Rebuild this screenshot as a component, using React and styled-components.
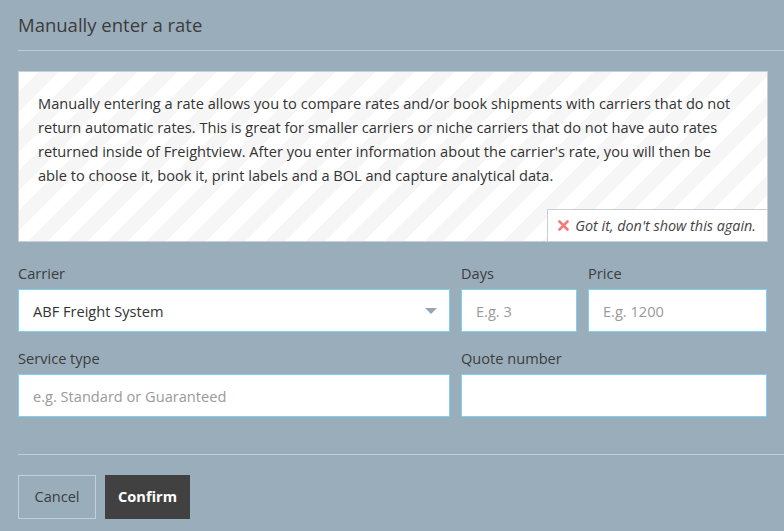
import React from "react";
import styled, { createGlobalStyle } from "styled-components";

const GlobalStyle = createGlobalStyle`
  html, body {
    margin: 0;
    padding: 0;
    background: #9aadbb;
  }
  body {
    font-family: "Open Sans", "Lato", sans-serif;
    color: #3a3a3a;
    overflow: hidden;
  }
`;

const Modal = styled.div`
  width: 784px;
  height: 531px;
  box-sizing: border-box;
  padding: 0 16px 0 18px;
  background: #9aadbb;
  overflow: hidden;
`;

const Header = styled.h2`
  margin: 0;
  padding: 12px 0 13px;
  font-size: 18.5px;
  font-weight: 400;
  color: #3c3c3c;
  line-height: 25px;
`;

const Divider = styled.div`
  height: 1px;
  background: #bfcdd6;
  margin-right: -16px;
`;

const InfoBox = styled.div`
  position: relative;
  margin-top: 20px;
  height: 171px;
  box-sizing: border-box;
  border: 1px solid #c9cfd3;
  background: repeating-linear-gradient(
    135deg,
    #ffffff 0,
    #ffffff 14px,
    #f6f6f6 14px,
    #f6f6f6 28px
  );
  padding: 19px 30px 0 19px;
`;

const InfoText = styled.p`
  margin: 0;
  font-size: 14.6px;
  line-height: 24px;
  color: #333;
`;

const Dismiss = styled.button`
  position: absolute;
  right: -1px;
  bottom: -1px;
  display: flex;
  align-items: center;
  gap: 6px;
  height: 33px;
  box-sizing: border-box;
  padding: 0 11px 0 10px;
  background: #fff;
  border: 1px solid #c9cfd3;
  font-family: inherit;
  font-style: italic;
  font-size: 14.4px;
  color: #444;
  cursor: pointer;
`;

const Form = styled.div`
  display: flex;
  flex-direction: column;
  gap: 17px;
  padding: 22px 0 37px;
`;

const Row = styled.div`
  display: grid;
  grid-template-columns: ${(p) => p.$cols};
  gap: 11px;
`;

const Field = styled.label`
  display: flex;
  flex-direction: column;
  gap: 7px;
`;

const Label = styled.span`
  font-size: 14.6px;
  line-height: 18px;
  color: #3d3d3d;
`;

const Input = styled.input`
  height: 43px;
  box-sizing: border-box;
  border: 1px solid #7fd2ef;
  background: #fff;
  padding: 0 14px;
  font-family: inherit;
  font-size: 14.6px;
  color: #333;
  outline: none;
  width: 100%;
  &::placeholder {
    color: #9a9a9a;
  }
`;

const Select = styled.div`
  height: 43px;
  box-sizing: border-box;
  border: 1px solid #7fd2ef;
  background: #fff;
  padding: 0 12px 0 14px;
  display: flex;
  align-items: center;
  justify-content: space-between;
  font-size: 14.6px;
  color: #333;
`;

const Caret = styled.span`
  width: 0;
  height: 0;
  border-left: 6px solid transparent;
  border-right: 6px solid transparent;
  border-top: 6px solid #94a6b3;
`;

const Footer = styled.div`
  display: flex;
  gap: 9px;
  padding-top: 20px;
`;

const Button = styled.button`
  height: 44px;
  min-width: ${(p) => (p.$primary ? "84px" : "78px")};
  box-sizing: border-box;
  padding: 0 12px 2px;
  font-family: inherit;
  font-size: 14.6px;
  cursor: pointer;
  border: 1px solid ${(p) => (p.$primary ? "#414141" : "#c3d0d9")};
  background: ${(p) => (p.$primary ? "#414141" : "transparent")};
  color: ${(p) => (p.$primary ? "#fff" : "#3d3d3d")};
  font-weight: ${(p) => (p.$primary ? 700 : 400)};
`;

export default function App() {
  return (
    <>
      <GlobalStyle />
      <Modal>
        <Header>Manually enter a rate</Header>
        <Divider />
        <InfoBox>
          <InfoText>
            Manually entering a rate allows you to compare rates and/or book
            shipments with carriers that do not return automatic rates. This is
            great for smaller carriers or niche carriers that do not have auto
            rates returned inside of Freightview. After you enter information
            about the carrier's rate, you will then be able to choose it, book
            it, print labels and a BOL and capture analytical data.
          </InfoText>
          <Dismiss>
            <svg width="11" height="11" viewBox="0 0 11 11">
              <path
                d="M1.5 1.5 L9.5 9.5 M9.5 1.5 L1.5 9.5"
                stroke="#f07b7b"
                strokeWidth="2.6"
                strokeLinecap="round"
              />
            </svg>
            Got it, don't show this again.
          </Dismiss>
        </InfoBox>
        <Form>
          <Row $cols="432px 116px 179px">
            <Field>
              <Label>Carrier</Label>
              <Select>
                ABF Freight System
                <Caret />
              </Select>
            </Field>
            <Field>
              <Label>Days</Label>
              <Input placeholder="E.g. 3" />
            </Field>
            <Field>
              <Label>Price</Label>
              <Input placeholder="E.g. 1200" />
            </Field>
          </Row>
          <Row $cols="432px 306px">
            <Field>
              <Label>Service type</Label>
              <Input placeholder="e.g. Standard or Guaranteed" />
            </Field>
            <Field>
              <Label>Quote number</Label>
              <Input />
            </Field>
          </Row>
        </Form>
        <Divider />
        <Footer>
          <Button>Cancel</Button>
          <Button $primary>Confirm</Button>
        </Footer>
      </Modal>
    </>
  );
}
